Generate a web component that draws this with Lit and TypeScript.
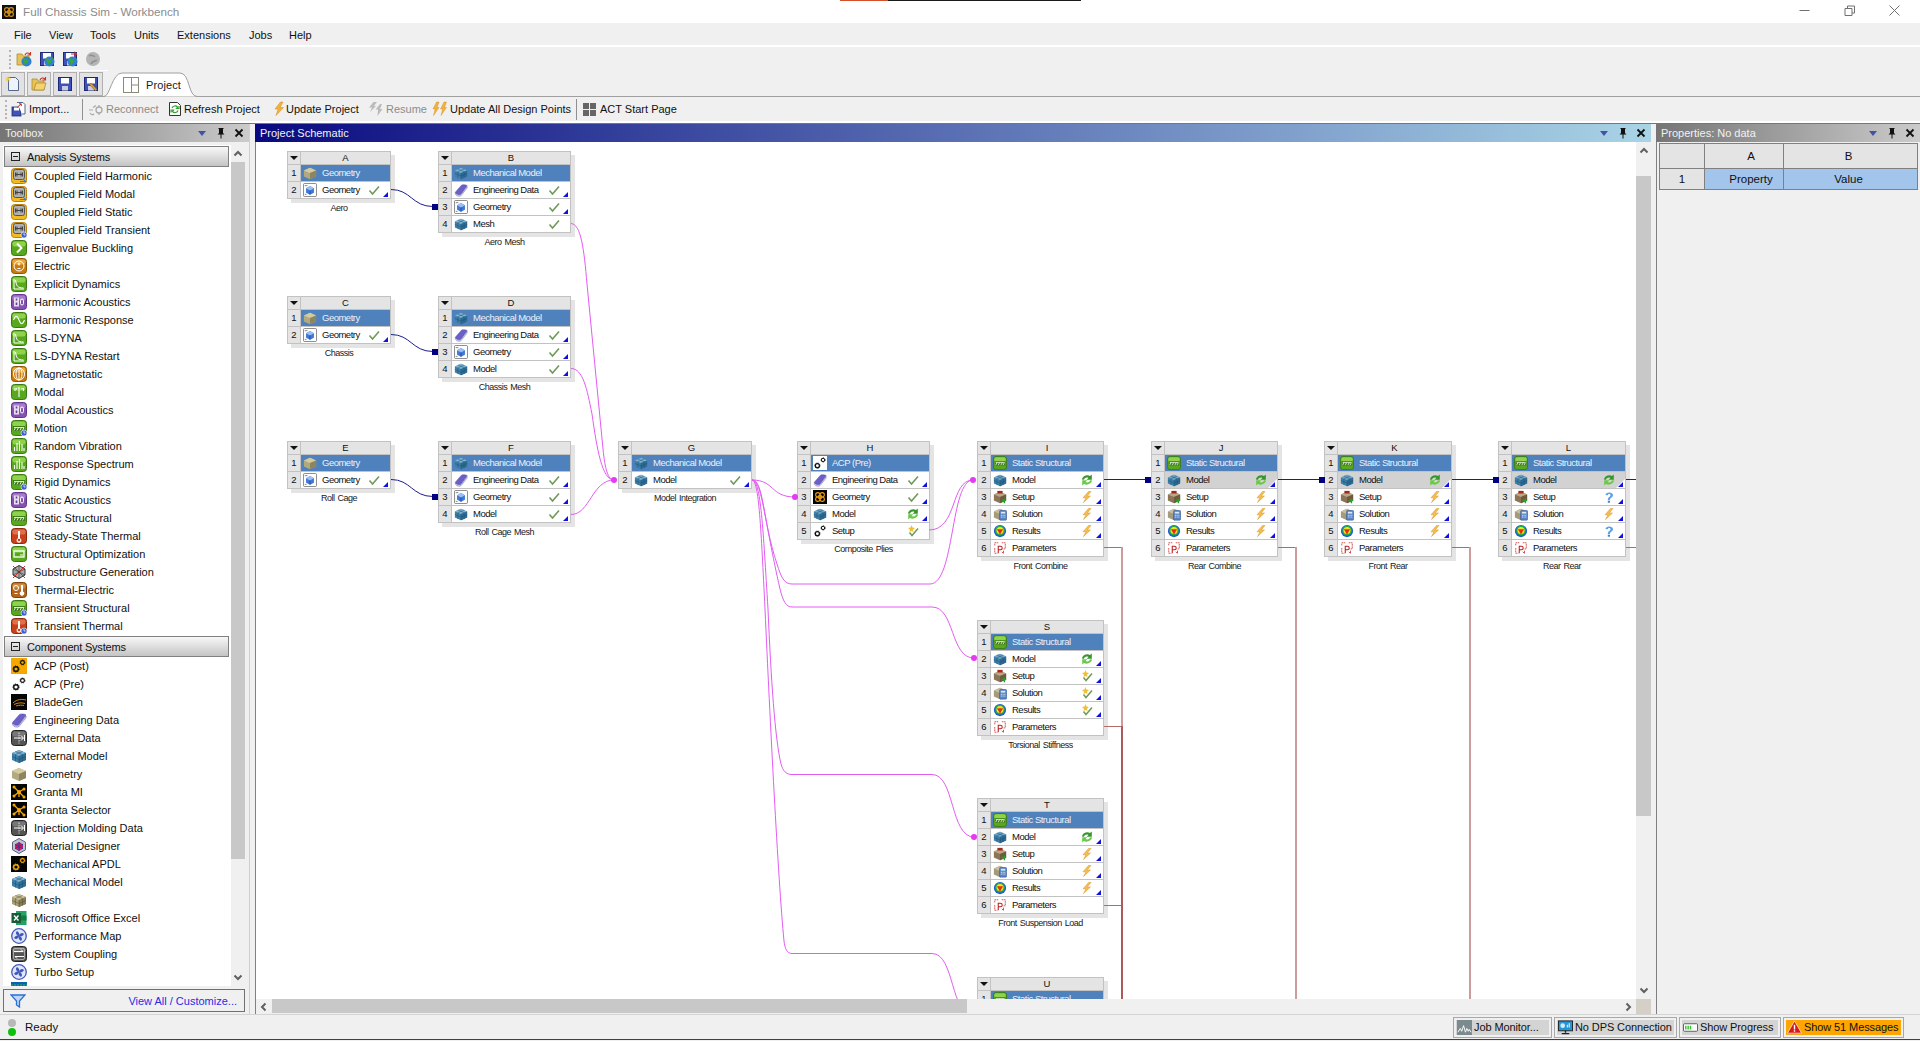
import { css, html, svg, LitElement } from "lit";
import { customElement } from "lit/decorators.js";

/* ---------- icon parts ---------- */

const gear = (cx: number, cy: number, r: number, c: string) => svg`
  <circle cx=${cx} cy=${cy} r=${r} fill="none" stroke=${c} stroke-width=${r * 0.6}></circle>
  <circle cx=${cx} cy=${cy} r=${r * 1.3} fill="none" stroke=${c} stroke-width=${r * 0.45} stroke-dasharray="1.1 1"></circle>`;

const block = (t: string, l: string, r: string, line?: string) => svg`
  <path d="M1 5 8 2l7 3v7l-7 3-7-3z" fill=${l}></path>
  <path d="M1 5 8 2l7 3-7 3z" fill=${t}></path>
  <path d="M8 8l7-3v7l-7 3z" fill=${r}></path>
  ${line
    ? svg`<path d="M1 8.5l7 3 7-3M4.5 3.5l7 3M11.5 3.5l-7 3M4.5 6.5v7M11.5 6.5v7M8 8v7" stroke=${line} stroke-width=".5" fill="none"></path>`
    : null}`;

const rounded = (fill: string, edge: string, top?: string) => svg`
  <rect x=".5" y=".5" width="15" height="15" rx="3" fill=${fill} stroke=${edge}></rect>
  ${top ? svg`<rect x="1.5" y="1.5" width="13" height="5" rx="2" fill=${top}></rect>` : null}`;

const clock = svg`<circle cx="13" cy="13" r="3" fill="#3d62cf" stroke="#fff" stroke-width=".6"></circle>
  <path d="M13 11v2h1.5" stroke="#fff" stroke-width=".7" fill="none"></path>`;

const beam = svg`<rect x="2" y="6" width="12" height="5" fill="#3f7d18"></rect>
  <path d="M3 7.5h10M4.5 7.5l-1.5 3M7.5 7.5l-1.5 3M10.5 7.5l-1.5 3M13 7.5l-1.5 3" stroke="#fff" stroke-width=".8" fill="none"></path>`;

const green = rounded("#58a81e", "#3b7a10", "#8fd34c");
const red = rounded("#c8401c", "#8a2a10", "#e0704a");
const purple = rounded("#8652b0", "#5f3590", "#a77cc8");
const amber = rounded("#c87c10", "#8c5608", "#e8a83a");

const cf = svg`
  <rect x=".5" y=".5" width="15" height="15" rx="3" fill="#f2bb22" stroke="#b88010"></rect>
  <rect x="2.5" y="1.5" width="11" height="10" rx="2" fill="#b0b0b0" stroke="#555"></rect>
  <path d="M4.5 6.5h7M4.5 4.5v4M11.5 4.5v4M6 4.5v4M10 4.5v4" stroke="#444" fill="none"></path>`;

const thermo = svg`<path d="M7 3h2v7.2a2.4 2.4 0 1 1-2 0z" fill="#fff"></path><circle cx="8" cy="12" r="1.3" fill="#c8401c"></circle>`;

const acoustic = svg`<rect x="3" y="3.5" width="5" height="9" fill="#e8def0"></rect>
  <rect x="9.5" y="5" width="3" height="6" rx="1.5" fill="none" stroke="#fff"></rect>
  <path d="M5.5 4.5v2M5.5 8.5v2.5" stroke="#6a3f95" stroke-width="1.6"></path>`;

const decay = svg`<path d="M3 3v10h10" stroke="#fff" fill="none"></path><path d="M4.5 4c1 6 2 8 8 8" stroke="#fff" fill="none"></path>`;
const bars = svg`<path d="M3.5 13V9M6 13V5M8.5 13V3M11 13V6M13 13v-3" stroke="#fff" stroke-width="1.1"></path>`;
const swap = svg`<path d="M3 5.5h9l-2-2M13 10.5H4l2 2" stroke="#fff" fill="none"></path><rect x="2.5" y="2.5" width="11" height="11" rx="1.5" fill="none" stroke="#ccc" stroke-width=".7"></rect>`;
const dark = rounded("#555", "#222", "#777");
const blackBox = svg`<rect width="16" height="16" fill="#050505"></rect>`;
const network = svg`${blackBox}<path d="M8 8 3 3M8 8l5-3M8 8v5M8 8l-5 4M8 8l5 5" stroke="#f5a800" stroke-width="1.3"></path>
  <circle cx="8" cy="8" r="2" fill="#f5a800"></circle><circle cx="3" cy="3" r="1.5" fill="#f5a800"></circle><circle cx="13" cy="5" r="1.5" fill="#f5a800"></circle><circle cx="3" cy="12" r="1.5" fill="#f5a800"></circle><circle cx="13" cy="13" r="1.5" fill="#f5a800"></circle>`;
const turbo = svg`<circle cx="8" cy="8" r="7.3" fill="#dfe5fa" stroke="#4058b8" stroke-width="1.3"></circle>
  <path d="M8 8C5 7 4 5 6 3 8 4 9 6 8 8ZM8 8C9 5 11 4 13 6 12 8 10 9 8 8ZM8 8c3 1 4 3 2 5-2-1-3-3-2-5ZM8 8c-1 3-3 4-5 2 1-2 3-3 5-2Z" fill="#4058b8"></path>`;
const knot = (bg: string, c: string) => svg`<rect width="16" height="16" fill=${bg}></rect>
  <g fill="none" stroke=${c} stroke-width="1.3"><circle cx="5.5" cy="5.5" r="2.5"></circle><circle cx="10.5" cy="5.5" r="2.5"></circle><circle cx="5.5" cy="10.5" r="2.5"></circle><circle cx="10.5" cy="10.5" r="2.5"></circle><circle cx="8" cy="8" r="2"></circle></g>`;
const book = svg`<path d="M1.500 10.500 8.500 2.500C10 1.500 14 2 15 3L8 12.500C6 14 2.500 13 1.500 10.500z" fill="#6a60c8" stroke="#4b42a0" stroke-width=".5"></path>
  <path d="M1.500 11C2.500 13.500 6 14.500 8 13L15 4v1.800L8 14.500C6 15.800 2.500 15 1.500 12.500z" fill="#e8e8f4" stroke="#5248a8" stroke-width=".5"></path>`;
const cube = svg`<path d="M8 3.500 3.500 6v5L8 13.500l4.500-2.500V6z" fill="#3f78d8"></path>
  <path d="M3.500 6 8 8.500 12.500 6 8 3.500z" fill="#9cc0f2"></path><path d="M8 8.500v5" stroke="#123a88" fill="none" stroke-width=".7"></path>`;
const geomRow = svg`<rect x=".5" y=".5" width="15" height="15" rx="1.500" fill="#fff" stroke="#777"></rect>
  <path d="M2 3h3M2 13h2" stroke="#777" fill="none"></path>${cube}`;
const results = svg`<circle cx="8" cy="8" r="7" fill="#1f5fd0"></circle><circle cx="8" cy="7.500" r="5.500" fill="#25b040"></circle><circle cx="8" cy="7.500" r="4" fill="#f2e020"></circle><path d="M4.500 6h7L8 12z" fill="#e03010"></path>`;
const params = svg`<path d="M2 5V2h4M10 2h4v7h-3M2 8v6h3" stroke="#d04040" fill="none" stroke-dasharray="2 .7"></path>
  <path d="M6 14V6h2.500a2 2 0 0 1 0 4H6" stroke="#b82020" stroke-width="1.2" fill="none"></path><path d="M12 11v3l-2-1.500" stroke="#d04040" fill="none"></path>`;
const calc = svg`<rect x="7.500" y="4" width="8" height="11" rx="1" fill="#5a85c8" stroke="#2a4f8a" stroke-width=".6"></rect>
  <rect x="9" y="5.500" width="5" height="2" fill="#dce8f8"></rect><path d="M9 9.500h1M11 9.500h1M13 9.500h1M9 11.500h1M11 11.500h1M13 11.500h1" stroke="#fff"></path>`;

const ICONS: Record<string, unknown> = {
  cf,
  cfa: svg`${cf}<path d="M9 13.500h5.500l-1.500-1.500" stroke="#3d7ad8" stroke-width="1.200" fill="none"></path>`,
  cft: svg`${cf}${clock}`,
  eig: svg`${green}<path d="M6 3.500 10.500 8 6 12.500" stroke="#fff" stroke-width="2" fill="none"></path>`,
  electric: svg`${amber}<circle cx="8" cy="8" r="5" fill="none" stroke="#fff"></circle><path d="M8 4.500v3M6.500 6h3M6.500 10.500h3" stroke="#fff" fill="none"></path>`,
  explicit: svg`${green}${decay}`,
  acoustic: svg`${purple}${acoustic}`,
  harmonic: svg`${green}<path d="M2.500 8c2-5 3.500-5 5.500 0s3.500 5 5.500 0" stroke="#fff" stroke-width="1.100" fill="none"></path>`,
  magneto: svg`${amber}<g fill="none" stroke="#fff"><ellipse cx="8" cy="8" rx="5.500" ry="6"></ellipse><ellipse cx="8" cy="8" rx="3" ry="6"></ellipse><path d="M8 2v12"></path></g>`,
  modal: svg`${green}<path d="M8 3v10M4 4v3M5.500 4v1.500M11 4v1.500M12.500 4v3" stroke="#fff" stroke-width="1.100"></path>`,
  motion: svg`${green}${beam}${clock}`,
  random: svg`${green}${bars}`,
  static: svg`${green}${beam}`,
  thermal: svg`${red}${thermo}`,
  transThermal: svg`${red}${thermo}${clock}`,
  opt: svg`${green}<rect x="3" y="5" width="10" height="6" fill="none" stroke="#fff" stroke-width="1.300"></rect><path d="M9 9h3" stroke="#fff"></path>`,
  substruct: svg`<path d="M8 1.500l6 3.500v6l-6 3.500-6-3.500V5z" fill="#aaa" stroke="#333"></path><path d="M2 2l12 12M14 2 2 14" stroke="#d03030"></path><path d="M8 1.500v13M2 5l12 6M14 5 2 11" stroke="#333" stroke-width=".6"></path>`,
  thermele: svg`${rounded("#b0641c", "#7c4410", "#d08a3e")}<circle cx="5" cy="6" r="2.500" fill="none" stroke="#fff"></circle><path d="M3.500 11.500h3" stroke="#fff"></path><path d="M10 3h2v6.500a2.200 2.200 0 1 1-2 0z" fill="#fff"></path>`,
  acpPost: svg`<rect width="16" height="16" fill="#f5a800"></rect>${gear(5, 11, 2.300, "#111")}${gear(11.500, 4.500, 1.900, "#111")}`,
  acp: svg`<rect width="16" height="16" fill="#fff"></rect>${gear(5, 11, 2.300, "#111")}${gear(11.500, 4.500, 1.900, "#111")}`,
  blade: svg`${blackBox}<path d="M2 9c4-4 9-4 13-3M3 10.500c4-2 8-2 11-1M5 12c3-1 6-1 8-.5" stroke="#d8860a" fill="none"></path>`,
  book,
  extdata: svg`${dark}<path d="M8 2.500v11" stroke="#ddd" stroke-dasharray="1.500 1"></path><path d="M3 8h9M10 5.500l2.500 2.500-2.500 2.500M13.500 5v6" stroke="#fff" fill="none"></path>`,
  mech: block("#7fb2d0", "#3f7fa8", "#2f6c94", "#174e70"),
  geom: block("#d4cba0", "#b2a97e", "#8d8560"),
  mesh: block("#c9c19a", "#a89f76", "#857c58", "#56502f"),
  granta: network,
  matdes: svg`<path d="M8 .5l6.500 3.700v7.600L8 15.500l-6.500-3.700V4.200z" fill="#c0c4d0" stroke="#5a6080"></path><path d="M8 4l4 2.300v4.400L8 13l-4-2.300V6.300z" fill="#d81858"></path><path d="M8 4v9M4 6.300l8 4.400M12 6.300l-8 4.400" stroke="#2040a0"></path>`,
  mapdl: svg`${blackBox}${gear(5, 11, 2.300, "#f5a800")}${gear(11.500, 4.500, 1.900, "#f5a800")}`,
  excel: svg`<rect x="5" y="1" width="10.500" height="14" fill="#21a366"></rect><rect x="5" y="5.500" width="10.500" height="5" fill="#107c41"></rect><rect x=".5" y="3" width="9.500" height="10" fill="#185c37"></rect><path d="M3 5.500l4.500 5M7.500 5.500 3 10.500" stroke="#fff" stroke-width="1.300"></path>`,
  perf: turbo,
  couple: svg`${dark}${swap}`,
  vista: svg`<rect width="16" height="16" fill="#1060b0"></rect><path d="M0 3h16" stroke="#20c060" stroke-dasharray="2 1"></path>`,
  geomRow,
  model: block("#6fa6c8", "#3f7fa8", "#2f6c94", "#174e70"),
  knotDark: knot("#050505", "#e89a10"),
  setup: svg`${block("#b8a888", "#8c7456", "#6f5c40")}<path d="M5 1h6v3H5z" fill="#a82818"></path><path d="M10 12h5M13 10v5" stroke="#28a028" stroke-width="1.600"></path>`,
  solution: svg`${block("#c8bfa0", "#a49b78", "#857c58")}${calc}`,
  results,
  params,
};

const refreshArrow = "M.8 5.500C1.800 2 6 .3 9 2L10.800 .5V5.700H5.600L7.500 3.900C5.500 2.800 3.500 3.800 3 5.700z";
const STATUS: Record<string, unknown> = {
  check: svg`<path d="M1.500 6.500 4.500 10 11 2.500" stroke="#6f9a5a" stroke-width="1.600" fill="none"></path>`,
  refresh: svg`<path d=${refreshArrow} fill="#35962a"></path>
    <path d=${refreshArrow} fill="#6cc84a" transform="rotate(180 6 6)"></path>`,
  bolt: svg`<path d="M7.500.5 2 6.800h3L2.500 11.500l7-6.500H6.300L10 .5z" fill="#f8bd52" stroke="#d2962a" stroke-width=".5"></path>`,
  question: svg`<path d="M2.500 4C2.500.5 10 .5 10 4c0 2.800-3 2.500-3 5H4.800c0-3.300 2.700-3 2.700-4.800 0-1.500-2.500-1.500-2.700 0z" fill="#5aa0ea"></path><rect x="4.800" y="9.700" width="2.200" height="2" fill="#3f83d0"></rect>`,
  star: svg`<path d="M4.500 0 5.500 2.500 8 3 6 4.800 6.500 7 4.500 6 2.500 7 3 4.800 1 3 3.500 2.500z" fill="#f0c030"></path>
    <path d="M2.500 7.500 5 10.500 11 3.500" stroke="#6f9a5a" stroke-width="1.500" fill="none"></path>`,
};

const icon = (name: string) => html`<svg class="ic" viewBox="0 0 16 16">${ICONS[name]}</svg>`;
const status = (name: string) => html`<svg class="st" viewBox="0 0 12 12">${STATUS[name]}</svg>`;

/* toolbar glyphs */
const globe = svg`<circle cx="10.500" cy="10.500" r="5" fill="#2f7fd8"></circle><path d="M7 8c2-1 2 1 4 1s1 3-.500 3-1.500 2-1.500 2M12 6.500c2 .5 2 2 3 2.500" fill="#39a83a" stroke="#39a83a"></path>`;
const folder = svg`<path d="M1 5V3h5l1 2h6v9H1z" fill="#e6c25c" stroke="#a8841e" stroke-width=".7"></path>`;
const floppy = svg`<rect x="1.500" y="1.500" width="13" height="13" fill="#3f52b8" stroke="#1e2a78"></rect><rect x="4" y="2" width="8" height="5.500" fill="#fff"></rect><rect x="5" y="10" width="6" height="4.500" fill="#ccd"></rect>`;
const redArrow = svg`<path d="M9 4c1-2.500 3-2.500 5-1M14.500 1v3h-3" stroke="#c83020" stroke-width="1.100" fill="none"></path>`;
const TOOL: Record<string, unknown> = {
  openGlobe: svg`${folder}${globe}${redArrow}`,
  saveGlobe: svg`${floppy}${globe}`,
  archiveGlobe: svg`${floppy}${globe}<path d="M9 3h6M12 .8 15 3l-3 2.200" stroke="#c83020" fill="none"></path>`,
  grayGlobe: svg`<circle cx="8" cy="8" r="7" fill="#b4b4b4"></circle><path d="M4 5c3-2 5 1 6 0M6 13c1-3 5-3 6-4" stroke="#8f8f8f" stroke-width="1.500" fill="none"></path>`,
  newDoc: svg`<path d="M3.500 1.500h7l3 3v10h-10z" fill="#eef3fb" stroke="#56688a"></path><path d="M3 .5v5M.5 3h5M1.300 1.300l3.400 3.400M4.700 1.300 1.300 4.700" stroke="#f4c828" stroke-width=".9"></path>`,
  openDoc: svg`${folder}<path d="M3 14 5 7h10l-2 7z" fill="#f3d272" stroke="#a8841e" stroke-width=".7"></path>${redArrow}`,
  save: floppy,
  saveAs: svg`${floppy}<path d="M8 7l6 6.500-1.500 1.500-6-6.500z" fill="#d8a030" stroke="#805c10" stroke-width=".5"></path>`,
  import: svg`<rect x="1" y="6" width="9" height="9" fill="#3f52b8" stroke="#1e2a78" stroke-width=".8"></rect><rect x="3" y="6.500" width="5" height="3" fill="#fff"></rect><path d="M6 1.500h6l2 2V13h-3" fill="#fff" stroke="#56688a"></path><path d="M6 6.500 10 3M8 2.800h2.300v2.300" stroke="#c83020" fill="none"></path>`,
  reconnect: svg`<path d="M1 9h4M11 4v2M11 12v2" stroke="#aaa" stroke-width="1.200"></path><circle cx="11" cy="9" r="3" fill="none" stroke="#aaa" stroke-width="1.300"></circle><path d="M5 6.500 8 4.500M2 12c1 2 3 2 4 1" stroke="#aaa" fill="none" stroke-width="1.200"></path>`,
  refresh: svg`<path d="M2.500 1.500h8l3 3v10h-11z" fill="#fff" stroke="#333"></path><path d="M5 7c1-2.500 4-2.500 5.500-1l-1 1.500h2.500V5M11 9.500c-1 2.500-4 2.500-5.500 1l1-1.500H4v2.500" fill="none" stroke="#2ea32a" stroke-width="1.200"></path>`,
  bolt: svg`<path d="M9.500 1 4 8h3.200L5 14.500l7.500-8H9L12 1z" fill="#f6b13a" stroke="#c98a1e" stroke-width=".5"></path>`,
  resume: svg`<path d="M6.500 1 2 6.500h3L3 11l6-6H7l3-4zM13 3 8.500 8.500H11l-.5 6.500 5-7h-2.500l2-5z" fill="#bbb"></path>`,
  boltTwo: svg`<path d="M4.500 1 1 8h2.200L1.500 14.500l5.500-8H5L7 1zM12 1 8.500 8h2.200L9 14.500l5.500-8h-2L14.500 1z" fill="#f6b13a" stroke="#c98a1e" stroke-width=".4"></path>`,
  grid: svg`<rect x="1" y="2" width="6" height="6" fill="#666"></rect><rect x="8" y="2" width="6" height="6" fill="#666"></rect><rect x="1" y="9" width="6" height="6" fill="#666"></rect><rect x="8" y="9" width="6" height="6" fill="#666"></rect>`,
  funnel: svg`<path d="M1 2h14L9.500 8v6l-3-2V8z" fill="#bcd6f4" stroke="#2a6fd8" stroke-width="1.300"></path>`,
  job: svg`<rect width="16" height="16" fill="#7a8a8e"></rect><path d="M1 13 3.500 9 5 12l2-6 2 7 1.500-4 1.500 3 1-2 2 3" stroke="#fff" fill="none"></path>`,
  dps: svg`<rect x=".5" y="1" width="15" height="10.500" fill="#2496d8" stroke="#222"></rect><circle cx="5" cy="6" r="2.500" fill="#cfeaf8"></circle><path d="M10 8V5M12 8V3.500" stroke="#cfeaf8" stroke-width="1.300"></path><path d="M8 11.500v2M4 14.500h8" stroke="#222" stroke-width="1.500"></path>`,
  progress: svg`<rect x=".5" y="4" width="15" height="8" rx="1" fill="#fff" stroke="#555"></rect><path d="M3 6v4M5.500 6v4M8 6v4" stroke="#30c030" stroke-width="1.500"></path>`,
  warn: svg`<path d="M8 1 15.500 14H.5z" fill="#d81818" stroke="#fff" stroke-width=".7"></path><path d="M8 5v5M8 11v1.500" stroke="#fff" stroke-width="1.500"></path><path d="M1 15h9" stroke="#d8b050" stroke-width="1.500"></path>`,
  paneTab: svg`<rect x=".5" y=".5" width="15" height="15" fill="#fff" stroke="#8a8a78"></rect><path d="M8.500 .5v15M8.500 8h7" stroke="#8a8a78"></path>`,
};
const tool = (name: string) => html`<svg class="tool-ic" viewBox="0 0 16 16">${TOOL[name]}</svg>`;

/* ---------- data ---------- */

const ANALYSIS: [string, string][] = [
  ["cfa", "Coupled Field Harmonic"], ["cfa", "Coupled Field Modal"], ["cf", "Coupled Field Static"],
  ["cft", "Coupled Field Transient"], ["eig", "Eigenvalue Buckling"], ["electric", "Electric"],
  ["explicit", "Explicit Dynamics"], ["acoustic", "Harmonic Acoustics"], ["harmonic", "Harmonic Response"],
  ["explicit", "LS-DYNA"], ["explicit", "LS-DYNA Restart"], ["magneto", "Magnetostatic"],
  ["modal", "Modal"], ["acoustic", "Modal Acoustics"], ["motion", "Motion"],
  ["random", "Random Vibration"], ["random", "Response Spectrum"], ["motion", "Rigid Dynamics"],
  ["acoustic", "Static Acoustics"], ["static", "Static Structural"], ["thermal", "Steady-State Thermal"],
  ["opt", "Structural Optimization"], ["substruct", "Substructure Generation"], ["thermele", "Thermal-Electric"],
  ["motion", "Transient Structural"], ["transThermal", "Transient Thermal"],
];

const COMPONENTS: [string, string][] = [
  ["acpPost", "ACP (Post)"], ["acp", "ACP (Pre)"], ["blade", "BladeGen"], ["book", "Engineering Data"],
  ["extdata", "External Data"], ["mech", "External Model"], ["geom", "Geometry"], ["granta", "Granta MI"],
  ["granta", "Granta Selector"], ["extdata", "Injection Molding Data"], ["matdes", "Material Designer"],
  ["mapdl", "Mechanical APDL"], ["mech", "Mechanical Model"], ["mesh", "Mesh"], ["excel", "Microsoft Office Excel"],
  ["perf", "Performance Map"], ["couple", "System Coupling"], ["perf", "Turbo Setup"], ["vista", ""],
];

type Row = { ic: string; t: string; st?: string; tri?: boolean; hl?: boolean };
type Node = { l: string; x: number; y: number; w: number; name: string; rows: Row[] };

const r = (ic: string, t: string, st?: string, tri = !!st): Row => ({ ic, t, st, tri });
const geomRows = () => [r("geom", "Geometry"), r("geomRow", "Geometry", "check")];
const meshRows = (last: string) => [
  r("mech", "Mechanical Model"),
  r("book", "Engineering Data", "check"),
  r("geomRow", "Geometry", "check"),
  last === "Mesh" ? r("mech", "Mesh", "check", false) : r("mech", last, "check"),
];
const staticRows = (set: string, sol: string, res: string, hl = false) => [
  r("static", "Static Structural"),
  { ...r("model", "Model", "refresh"), hl },
  r("setup", "Setup", set),
  r("solution", "Solution", sol),
  r("results", "Results", res),
  r("params", "Parameters"),
];

const NODES: Node[] = [
  { l: "A", x: 287, y: 152, w: 104, name: "Aero", rows: geomRows() },
  { l: "B", x: 438, y: 152, w: 133, name: "Aero Mesh", rows: meshRows("Mesh") },
  { l: "C", x: 287, y: 297, w: 104, name: "Chassis", rows: geomRows() },
  { l: "D", x: 438, y: 297, w: 133, name: "Chassis Mesh", rows: meshRows("Model") },
  { l: "E", x: 287, y: 442, w: 104, name: "Roll Cage", rows: geomRows() },
  { l: "F", x: 438, y: 442, w: 133, name: "Roll Cage Mesh", rows: meshRows("Model") },
  { l: "G", x: 618, y: 442, w: 134, name: "Model Integration", rows: [r("mech", "Mechanical Model"), r("mech", "Model", "check")] },
  {
    l: "H", x: 797, y: 442, w: 133, name: "Composite Plies",
    rows: [
      r("acp", "ACP (Pre)"),
      r("book", "Engineering Data", "check"),
      r("knotDark", "Geometry", "check"),
      r("model", "Model", "refresh"),
      r("acp", "Setup", "star", false),
    ],
  },
  { l: "I", x: 977, y: 442, w: 127, name: "Front Combine", rows: staticRows("bolt", "bolt", "bolt") },
  { l: "J", x: 1151, y: 442, w: 127, name: "Rear Combine", rows: staticRows("bolt", "bolt", "bolt", true) },
  { l: "K", x: 1324, y: 442, w: 128, name: "Front Rear", rows: staticRows("bolt", "bolt", "bolt", true) },
  { l: "L", x: 1498, y: 442, w: 128, name: "Rear Rear", rows: staticRows("question", "bolt", "question", true) },
  { l: "S", x: 977, y: 621, w: 127, name: "Torsional Stiffness", rows: staticRows("star", "star", "star") },
  { l: "T", x: 977, y: 799, w: 127, name: "Front Suspension Load", rows: staticRows("bolt", "bolt", "bolt") },
  // only its head and first row show above the scrollbar
  { l: "U", x: 977, y: 978, w: 127, name: "", rows: [r("static", "Static Structural")] },
];

const BLUE_WIRES = [
  "M391 190.500C411 190.500 412 207.500 433 207.500",
  "M391 335.500C411 335.500 412 352.500 433 352.500",
  "M391 480.500C411 480.500 412 497.500 433 497.500",
  "M1104 480.500H1146", "M1278 480.500H1319", "M1452 480.500H1493", "M1626 480.500H1636",
];
const BLUE_SQUARES = [[432, 205], [432, 350], [432, 495], [1145, 478], [1319, 478], [1493, 478]];

const PINK_WIRES = [
  "M571 224.500C581 225 584 250 587 285L603 450C605 470 608 481 614 481",
  "M571 369.500C583 369.500 587 390 592 415C597 450 602 481 614 481",
  "M571 515.500C590 515.500 592 481 614 481",
  "M752 481C775 481 770 498 795 498",
  "M752 481C764 481 762 520 777 565C781 578 784 585 792 585H930C955 585 950 481 973 481",
  "M929 531C958 531 950 481 973 481",
  "M752 481C762 481 764 520 780 590C783 602 786 608 792 608H932C955 608 950 659 974 659",
  "M752 481C761 481 763 530 768 610C771 680 775 740 781 765C783 772 786 775.500 792 775.500H932C955 775.500 950 838 974 838",
  "M752 481C759 481 761 530 765 610C770 720 778 880 784 942C785 950 787 954.500 792 954.500H932C955 954.500 950 1017 974 1017",
];
const PINK_DOTS = [[614, 481], [795, 498], [973, 481], [974, 659], [974, 838]];

const RED_LINES = [
  "M1104 548.500H1121", "M1104 727.500H1121", "M1104 906.500H1121",
  "M1278 548.500H1295", "M1452 548.500H1469", "M1626 548.500H1636",
];

const TOP_ITEMS = [
  { ic: "import", t: "Import...", w: 66, slot: 18 },
  { sep: true },
  { ic: "reconnect", t: "Reconnect", w: 79, slot: 18, off: true },
  { ic: "refresh", t: "Refresh Project", w: 104, slot: 17 },
  { ic: "bolt", t: "Update Project", w: 96, slot: 15 },
  { ic: "resume", t: "Resume", w: 65, slot: 19, off: true },
  { ic: "boltTwo", t: "Update All Design Points", w: 139, slot: 18 },
  { sep: true },
  { ic: "grid", t: "ACT Start Page", w: 100, slot: 18 },
];

const MENU: [string, number][] = [["File", 35], ["View", 41], ["Tools", 44], ["Units", 43], ["Extensions", 72], ["Jobs", 40], ["Help", 40]];

const STATUS_BOXES = [
  { ic: "job", t: "Job Monitor...", w: 99 },
  { ic: "dps", t: "No DPS Connection", w: 123 },
  { ic: "progress", t: "Show Progress", w: 102 },
  { ic: "warn", t: "Show 51 Messages", w: 121, warn: true },
];

const chevron = (d: string) => html`<svg class="chev" viewBox="0 0 10 10"><path d=${d}></path></svg>`;
const UP = "M1.500 6.500 5 3l3.500 3.500";
const DOWN = "M1.500 3.500 5 7l3.500-3.500";
const LEFT = "M6.500 1.500 3 5l3.500 3.500";
const RIGHT = "M3.500 1.500 7 5 3.500 8.500";

const panelTools = html`<div class="ptools">
  <span class="drop"></span>
  <svg class="pin" viewBox="0 0 10 12"><path d="M2.500 1h5v1H7v4l1.500 1.500h-7L3 6V2h-.5zM4.500 7.500h1V11.500h-1z"></path></svg>
  <svg class="x" viewBox="0 0 10 10"><path d="M1.500 1.500l7 7M8.500 1.500l-7 7"></path></svg>
</div>`;

/* ---------- element ---------- */

@customElement("app-root")
export class AppRoot extends LitElement {
  static styles = css`
    :host {
      display: block;
      width: 1920px;
      height: 1041px;
      overflow: hidden;
      background: #f0f0f0;
      font: 11px "Liberation Sans", Arial, sans-serif;
      color: #101010;
    }
    .app { display: flex; flex-direction: column; height: 1041px; }
    svg { display: block; flex: none; }

    /* title + menus */
    .title { height: 23px; background: #fff; display: flex; align-items: center; position: relative; flex: none; }
    .title .logo { width: 14px; height: 14px; margin-left: 2px; }
    .title .name { margin-left: 7px; font-size: 11.700px; color: #8c8c8c; }
    .strip { position: absolute; top: 0; left: 840px; width: 241px; height: 1px; background: linear-gradient(90deg, #d2502a 0 48px, #1a1a1a 48px); }
    .winbtns { margin-left: auto; display: flex; margin: 0 18px 3px auto; gap: 30px; align-items: center; }
    .winbtns svg { width: 15px; height: 15px; fill: none; stroke: #707070; }
    .menu { height: 22px; box-sizing: border-box; padding: 1px 0 0 14px; display: flex; align-items: center; flex: none; }
    .gapline { height: 2px; background: #fff; flex: none; }

    .row1 { height: 24px; flex: none; position: relative; display: flex; align-items: center; padding-left: 9px; gap: 7px; }
    .grip { width: 0; height: 19px; border-left: 2px dotted #b4b4b4; }
    .row1 .under { position: absolute; left: 4px; bottom: 0; width: 104px; height: 1px; background: #fff; }
    .tool-ic { width: 16px; height: 16px; }
    .row1 .grip { margin-right: -2px; }

    .row2 { height: 26px; flex: none; box-sizing: border-box; border-bottom: 1px solid #a0a0a0; display: flex; padding: 1px 0 0 1px; gap: 2px; }
    .sq { width: 24px; height: 24px; box-sizing: border-box; border: 1px solid #b0b0b0; background: #e2e2e2; display: flex; align-items: center; justify-content: center; }
    .tab { position: relative; width: 93px; height: 25px; margin-left: -1px; display: flex; align-items: center; }
    .tab .shape { position: absolute; inset: 0; width: 93px; height: 25px; }
    .tab .tool-ic { position: relative; margin-left: 19px; }
    .tab span { position: relative; margin-left: 7px; font-size: 11px; letter-spacing: .1px; color: #202020; }

    .row3 { height: 24px; flex: none; display: flex; align-items: center; padding-left: 5px; }
    .row3 .grip { margin-right: 4px; }
    .ti { display: flex; align-items: center; white-space: nowrap; flex: none; }
    .ti.off { color: #8c8c8c; }
    .slot { flex: none; }
    .vsep { width: 1px; height: 21px; background: #909090; margin: 0 5px; flex: none; }
    .rule { height: 2px; background: #fff; flex: none; }
    .rule2 { height: 1px; background: #777; flex: none; }

    /* panels */
    .main { height: 890px; flex: none; display: flex; }
    .phead { height: 18px; flex: none; display: flex; align-items: center; padding-left: 5px; color: #f2f2f2; font-size: 11px; }
    .grey { background: linear-gradient(90deg, #757575, #cbcbcb); }
    .navy { background: linear-gradient(90deg, #0a0a80, #a9d4e6); }
    .ptools { margin-left: auto; display: flex; align-items: center; gap: 0; }
    .drop { width: 0; height: 0; margin: 0 10px 0 0; border: 4px solid transparent; border-top: 5px solid #4452a6; border-bottom: 0; }
    .pin { width: 10px; height: 12px; fill: #111; margin-right: 8px; }
    .x { width: 10px; height: 10px; stroke: #111; stroke-width: 1.800px; margin-right: 5px; }

    .toolbox { width: 250px; flex: none; display: flex; flex-direction: column; box-sizing: border-box; border-right: 1px solid #cfcfcf; }
    .tbody { display: flex; flex-direction: column; padding: 3px 0 0 3px; flex: 1; min-height: 0; }
    .lister { display: flex; height: 841px; flex: none; }
    .list { width: 228px; height: 841px; background: #fff; overflow: hidden; flex: none; }
    .sect {
      width: 225px; height: 21px; margin: 1px 0 0 1px; box-sizing: border-box; border: 1px solid #808080;
      background: linear-gradient(#f8f8f8, #c4c4c4); display: flex; align-items: center; letter-spacing: -.2px;
    }
    .minus { width: 9px; height: 9px; box-sizing: border-box; border: 1px solid #222; margin: 0 7px 0 6px; position: relative; }
    .minus::after { content: ""; position: absolute; left: 1px; right: 1px; top: 3px; height: 1px; background: #222; }
    .item { height: 18px; display: flex; align-items: center; padding-left: 8px; gap: 7px; }
    .ic { width: 16px; height: 16px; }

    .vbar { width: 14px; flex: none; display: flex; flex-direction: column; background: #f0f0f0; }
    .arrow { flex: none; display: flex; align-items: center; justify-content: center; }
    .chev { width: 10px; height: 10px; fill: none; stroke: #606060; stroke-width: 2px; }
    .thumb { background: #c8c8c8; flex: none; }
    .grow { flex: 1; }
    .lister .up { height: 17px; }
    .lister .thumb { height: 697px; }
    .lister .down { height: 18px; }

    .foot {
      width: 242px; height: 23px; margin-top: 3px; box-sizing: border-box; border: 1px solid #707070;
      display: flex; align-items: center; padding: 0 7px 0 6px; justify-content: space-between; color: #2a2ae8;
    }

    .schem { width: 1396px; margin-left: 5px; flex: none; display: flex; flex-direction: column; }
    .sbody { flex: 1; min-height: 0; border-left: 1px solid #808080; display: grid; grid-template-columns: 1380px 15px; grid-template-rows: 857px 15px; }
    .canvas { position: relative; overflow: hidden; background: #fff; }
    .wires { position: absolute; inset: 0; pointer-events: none; }
    .svbar { width: 15px; height: 857px; }
    .svbar .up { height: 18px; }
    .svbar .thumb { height: 640px; margin-top: 16px; }
    .svbar .down { height: 18px; }
    .hbar { display: flex; align-items: flex-start; background: #f0f0f0; }
    .hbar .arrow { width: 16px; height: 15px; }
    .hbar .thumb { width: 695px; height: 14px; }
    .corner { background: #d4d0c8; width: 15px; height: 15px; }

    .node { position: absolute; display: flex; flex-direction: column; }
    .box { box-sizing: border-box; border: 1px solid #c2c2c2; box-shadow: 4px 4px 0 #e4e4e4; background: #fff; }
    .hd { height: 13px; box-sizing: border-box; border-bottom: 1px solid #c2c2c2; display: flex; background: #e4e4e4; }
    .hd .corner-cell { width: 13px; box-sizing: border-box; border-right: 1px solid #c2c2c2; display: flex; align-items: center; justify-content: center; }
    .hd .tri { width: 0; height: 0; border: 4px solid transparent; border-top: 4px solid #111; border-bottom: 0; }
    .hd .let { flex: 1; text-align: center; font-size: 9.500px; line-height: 12px; }
    .rw { height: 17px; box-sizing: border-box; border-bottom: 1px solid #c2c2c2; display: flex; position: relative; }
    .rw:last-child { height: 16px; border-bottom: 0; }
    .rw .num { width: 13px; flex: none; box-sizing: border-box; border-right: 1px solid #c2c2c2; background: #e4e4e4; font-size: 9.500px; text-align: center; line-height: 15px; }
    .cell { flex: 1; min-width: 0; display: flex; align-items: center; padding: 0 0 1px 2px; font-size: 9.500px; letter-spacing: -.5px; white-space: nowrap; }
    .cell .ic { width: 14px; height: 14px; margin-right: 5px; }
    .rw.first .cell { background: #4f81bd; color: #eaf1f9; }
    .rw.hl .cell { background: #d2d2d2; }
    .st { width: 12px; height: 12px; margin-left: auto; margin-right: 10px; }
    .corner-w { position: absolute; right: 0; bottom: 0; width: 9px; height: 9px; background: #fff; clip-path: polygon(100% 0, 100% 100%, 0 100%); }
    .corner-b { position: absolute; right: 2px; bottom: 1px; width: 5px; height: 5px; background: #1010e0; clip-path: polygon(100% 0, 100% 100%, 0 100%); }
    .lbl { text-align: center; margin-top: 3px; font-size: 9px; letter-spacing: -.5px; word-spacing: 1px; line-height: 12px; color: #202020; white-space: nowrap; }

    .props { flex: 1; margin-left: 5px; display: flex; flex-direction: column; }
    .pbody { flex: 1; border-left: 1px solid #808080; padding: 1px 0 0 2px; }
    table { border-collapse: collapse; table-layout: fixed; width: 258px; font-size: 11.500px; }
    td { border: 1px solid #808080; text-align: center; padding: 0; background: #e4e4e4; height: 24px; }
    tr + tr td { height: 20px; }
    td.blue { background: #a3c5ec; }
    td.ca { padding-left: 14px; }
    td.cb { padding-right: 4px; }

    /* status */
    .status { height: 26px; flex: none; box-sizing: border-box; border-top: 1px solid #d4d4d4; border-bottom: 1px solid #404040; display: flex; align-items: center; padding-left: 7px; }
    .lamps { display: flex; flex-direction: column; gap: 1px; margin-right: 8px; width: 10px; align-items: center; }
    .lamps i { width: 8px; height: 8px; border-radius: 50%; background: #b8b8b8; display: block; }
    .lamps i + i { background: #0fc00f; }
    .ready { font-size: 11.500px; }
    .sboxes { margin-left: auto; margin-right: 16px; display: flex; gap: 2px; }
    .sbox { height: 21px; box-sizing: border-box; border: 1px solid #a8a8a8; padding: 2px; letter-spacing: -.1px; }
    .sbox div { height: 15px; background: #d4d4d4; display: flex; align-items: center; gap: 2px; white-space: nowrap; padding-left: 1px; }
    .sbox.warn div { background: #ffa500; }
    .sbox .tool-ic { width: 15px; height: 15px; }
  `;

  private renderNode(n: Node) {
    return html`<div class="node" style="left:${n.x - 256}px;top:${n.y - 143}px;width:${n.w}px">
      <div class="box">
        <div class="hd"><div class="corner-cell"><span class="tri"></span></div><div class="let">${n.l}</div></div>
        ${n.rows.map((row, i) => html`<div class="rw ${i === 0 ? "first" : ""} ${row.hl ? "hl" : ""}">
          <div class="num">${i + 1}</div>
          <div class="cell">
            ${icon(row.ic)}<span>${row.t}</span>${row.st ? status(row.st) : null}
          </div>
          ${row.hl ? html`<span class="corner-w"></span>` : null}
          ${row.tri ? html`<span class="corner-b"></span>` : null}
        </div>`)}
      </div>
      ${n.name ? html`<div class="lbl">${n.name}</div>` : null}
    </div>`;
  }

  private renderWires() {
    return html`<svg class="wires" viewBox="256 143 1380 857" width="1380" height="857">
      <g fill="none" stroke="#e25cf2" stroke-width="1">
        ${PINK_WIRES.map((d) => svg`<path d=${d}></path>`)}
      </g>
      ${PINK_DOTS.map(([x, y]) => svg`<circle cx=${x} cy=${y} r="3" fill="#e23cf0"></circle>`)}
      <g fill="none" stroke="#1d1d8f" stroke-width="1">
        ${BLUE_WIRES.map((d) => svg`<path d=${d}></path>`)}
      </g>
      ${BLUE_SQUARES.map(([x, y]) => svg`<rect x=${x} y=${y} width="6" height="6" fill="#000080"></rect>`)}
      <g fill="none" stroke="#b46a6a" stroke-width="1">
        ${RED_LINES.map((d) => svg`<path d=${d}></path>`)}
      </g>
      <g fill="none" stroke-width="2">
        <path d="M1122 548V727" stroke="#cc9c9c"></path>
        <path d="M1122 727V1000" stroke="#aa5c5c"></path>
        <path d="M1296 548V1000" stroke="#cc9c9c"></path>
        <path d="M1470 548V1000" stroke="#cc9c9c"></path>
      </g>
    </svg>`;
  }

  render() {
    return html`<div class="app">
      <div class="title">
        <svg class="logo" viewBox="0 0 16 16">${knot("#111", "#d49018")}</svg>
        <span class="name">Full Chassis Sim - Workbench</span>
        <div class="strip"></div>
        <div class="winbtns">
          <svg viewBox="0 0 15 15"><path d="M2.500 7.500h10"></path></svg>
          <svg viewBox="0 0 15 15"><path d="M3 5.500h7v7H3zM5.500 5.500V3H12.500v7H10"></path></svg>
          <svg viewBox="0 0 15 15"><path d="M2.500 2.500l10 10M12.500 2.500l-10 10"></path></svg>
        </div>
      </div>
      <div class="menu">
        ${MENU.map(([t, w]) => html`<span style="width:${w}px">${t}</span>`)}
      </div>
      <div class="gapline"></div>
      <div class="row1">
        <span class="grip"></span>
        ${tool("openGlobe")}${tool("saveGlobe")}${tool("archiveGlobe")}${tool("grayGlobe")}
        <div class="under"></div>
      </div>
      <div class="row2">
        ${["newDoc", "openDoc", "save", "saveAs"].map((n) => html`<div class="sq">${tool(n)}</div>`)}
        <div class="tab">
          <svg class="shape" viewBox="0 0 93 25"><path d="M0 24.500C6 24.500 8 1 18 1H76C86 1 84 24.500 93 24.500" fill="#fff" stroke="#a0a0a0"></path></svg>
          ${tool("paneTab")}<span>Project</span>
        </div>
      </div>
      <div class="row3">
        <span class="grip"></span>
        ${TOP_ITEMS.map((it) =>
          it.sep
            ? html`<span class="vsep"></span>`
            : html`<div class="ti ${it.off ? "off" : ""}" style="width:${it.w}px">
                <div class="slot" style="width:${it.slot}px">${tool(it.ic as string)}</div>${it.t}
              </div>`
        )}
      </div>
      <div class="rule"></div>
      <div class="rule2"></div>

      <div class="main">
        <section class="toolbox">
          <div class="phead grey">Toolbox${panelTools}</div>
          <div class="tbody">
            <div class="lister">
              <div class="list">
                <div class="sect"><span class="minus"></span>Analysis Systems</div>
                ${ANALYSIS.map(([ic, t]) => html`<div class="item">${icon(ic)}<span>${t}</span></div>`)}
                <div class="sect"><span class="minus"></span>Component Systems</div>
                ${COMPONENTS.map(([ic, t]) => html`<div class="item">${icon(ic)}<span>${t}</span></div>`)}
              </div>
              <div class="vbar">
                <div class="arrow up">${chevron(UP)}</div>
                <div class="thumb"></div>
                <div class="grow"></div>
                <div class="arrow down">${chevron(DOWN)}</div>
              </div>
            </div>
            <div class="foot">${tool("funnel")}<span>View All / Customize...</span></div>
          </div>
        </section>

        <section class="schem">
          <div class="phead navy"><span>Project Schematic</span>${panelTools}</div>
          <div class="sbody">
            <div class="canvas">
              ${NODES.map((n) => this.renderNode(n))}
              ${this.renderWires()}
            </div>
            <div class="vbar svbar">
              <div class="arrow up">${chevron(UP)}</div>
              <div class="thumb"></div>
              <div class="grow"></div>
              <div class="arrow down">${chevron(DOWN)}</div>
            </div>
            <div class="hbar">
              <div class="arrow">${chevron(LEFT)}</div>
              <div class="thumb"></div>
              <div class="grow"></div>
              <div class="arrow">${chevron(RIGHT)}</div>
            </div>
            <div class="corner"></div>
          </div>
        </section>

        <section class="props">
          <div class="phead grey">Properties: No data${panelTools}</div>
          <div class="pbody">
            <table>
              <colgroup><col style="width:45px" /><col style="width:79px" /><col style="width:134px" /></colgroup>
              <tr><td></td><td class="ca">A</td><td class="cb">B</td></tr>
              <tr><td>1</td><td class="blue ca">Property</td><td class="blue cb">Value</td></tr>
            </table>
          </div>
        </section>
      </div>

      <div class="status">
        <div class="lamps"><i></i><i></i></div>
        <span class="ready">Ready</span>
        <div class="sboxes">
          ${STATUS_BOXES.map((b) => html`<div class="sbox ${b.warn ? "warn" : ""}" style="width:${b.w}px">
            <div>${tool(b.ic)}<span>${b.t}</span></div>
          </div>`)}
        </div>
      </div>
    </div>`;
  }
}
